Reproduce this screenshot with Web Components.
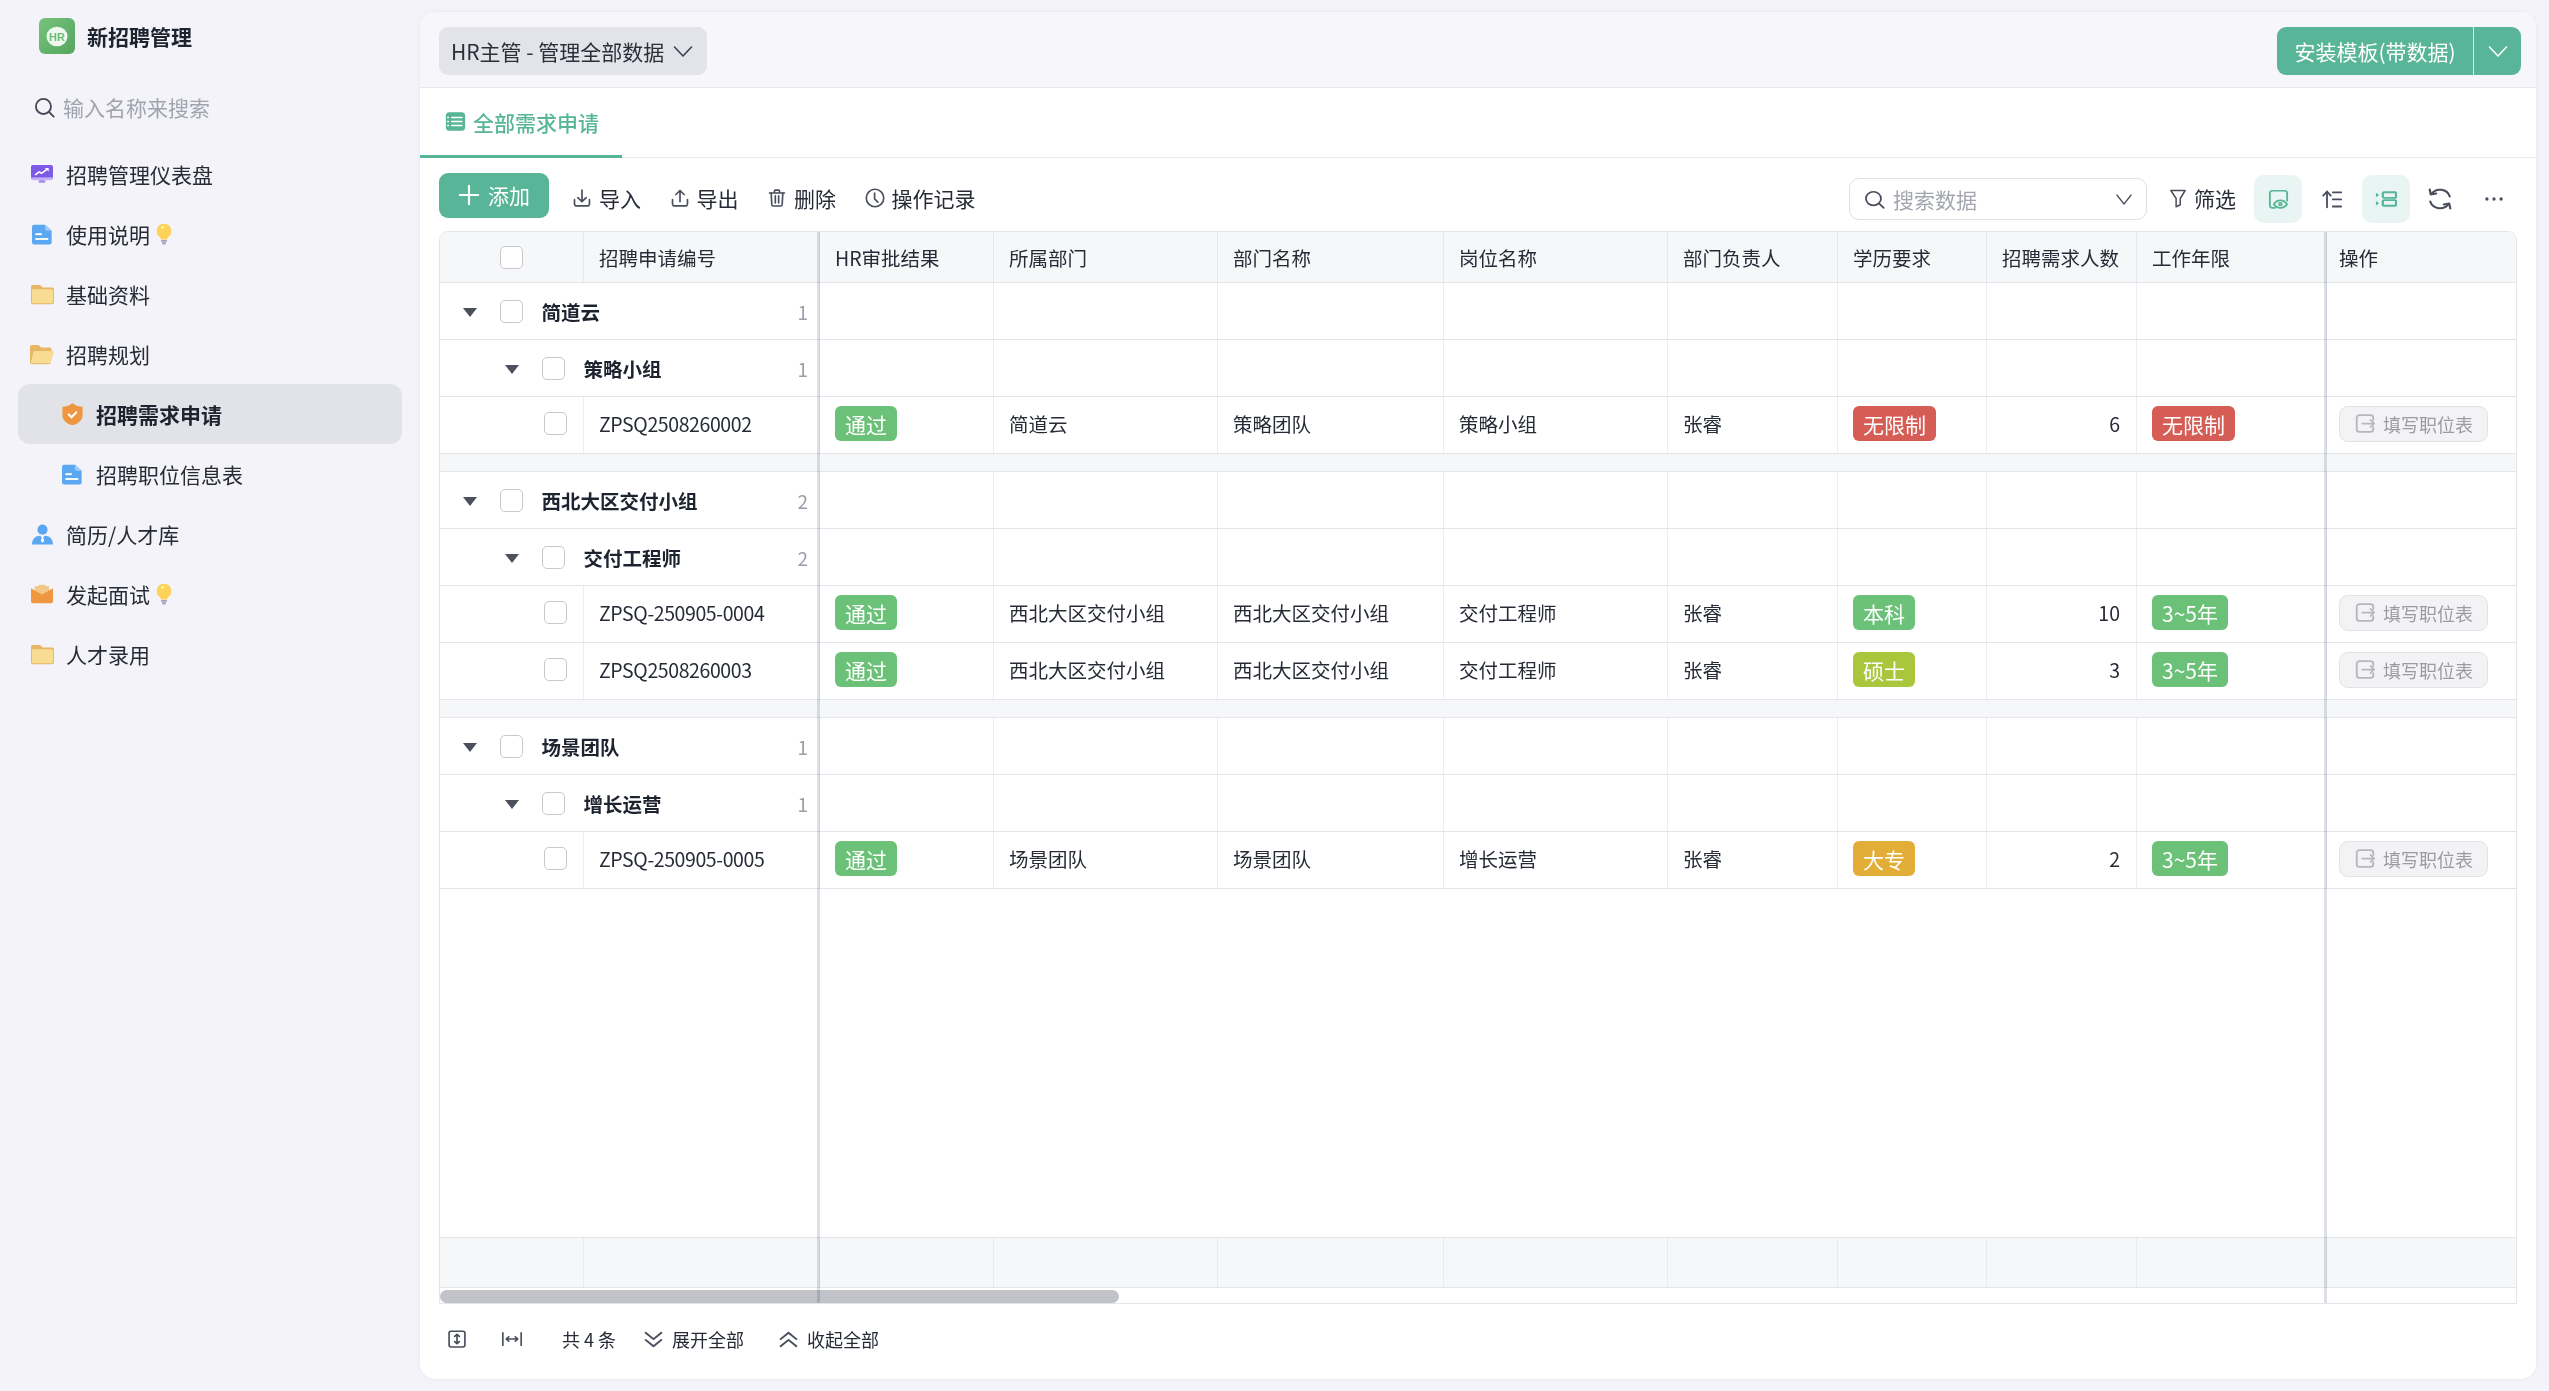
<!DOCTYPE html>
<html lang="zh-CN">
<head>
<meta charset="utf-8">
<title>新招聘管理</title>
<style>
html,body{margin:0;padding:0;height:100%;background:#f3f3f9;overflow:hidden}
body{font-family:"Noto Sans CJK SC","Noto Sans",sans-serif;color:#1f2430;font-size:21px}
</style>
</head>
<body>
<app-shell>
  <side-nav slot="side" title-text="新招聘管理" placeholder="输入名称来搜索">
    <nav-item icon="monitor" label="招聘管理仪表盘"></nav-item>
    <nav-item icon="doc" label="使用说明" bulb></nav-item>
    <nav-item icon="folder" label="基础资料"></nav-item>
    <nav-item icon="folderopen" label="招聘规划"></nav-item>
    <nav-item icon="shield" label="招聘需求申请" level="2" active></nav-item>
    <nav-item icon="doc" label="招聘职位信息表" level="2"></nav-item>
    <nav-item icon="person" label="简历/人才库"></nav-item>
    <nav-item icon="mail" label="发起面试" bulb></nav-item>
    <nav-item icon="folder" label="人才录用"></nav-item>
  </side-nav>
  <main-panel slot="main">
    <data-toolbar></data-toolbar>
    <data-table></data-table>
    <table-footer></table-footer>
  </main-panel>
</app-shell>

<script>
const S='fill="none" stroke="currentColor" stroke-linecap="round" stroke-linejoin="round"';
const ICONS={
search:`<g ${S} stroke-width="2.1"><circle cx="10.8" cy="10.8" r="8.6"/><path d="M17 17L22.5 22.5"/></g>`,
chevron:`<path ${S} stroke-width="1.6" d="M3.500 8l8.500 9 8.500-9"/>`,
plus:`<path ${S} stroke-width="2.400" d="M12 2v20M2 12h20"/>`,
importi:`<g ${S} stroke-width="2"><path d="M3 14v5a2.500 2.500 0 0 0 2.500 2.500h13A2.500 2.500 0 0 0 21 19v-5"/><path d="M12 2.500v13.500M7 11.500l5 4.800 5-4.800"/></g>`,
exporti:`<g ${S} stroke-width="2"><path d="M3 14v5a2.500 2.500 0 0 0 2.500 2.500h13A2.500 2.500 0 0 0 21 19v-5"/><path d="M12 16.500V3M7 7.800L12 3l5 4.800"/></g>`,
trash:`<g ${S} stroke-width="2"><path d="M3 6h18M9 5.500V3.500a1 1 0 0 1 1-1h4a1 1 0 0 1 1 1v2"/><path d="M5 6l.800 14a1.800 1.800 0 0 0 1.800 1.600h8.800a1.800 1.800 0 0 0 1.800-1.600L19 6"/><path d="M10 9.500v8.500M14 9.500v8.500"/></g>`,
clock:`<g ${S} stroke-width="2"><circle cx="12" cy="12" r="10.500"/><path d="M11.500 6v7l4 4"/></g>`,
filter:`<path ${S} stroke-width="2" d="M2.500 3h19L15 12.500V20l-5.500 2.500V12.500z"/>`,
eyedoc:`<g ${S} stroke-width="1.900"><path d="M8.500 21.500H5.500a2.500 2.500 0 0 1-2.500-2.500V4.500A2.500 2.500 0 0 1 5.500 2h13A2.500 2.500 0 0 1 21 4.500v9"/><path d="M7 17.500c2-3.400 4.200-4.500 7-4.500s5 1.100 7 4.500c-2 3-4.200 4-7 4s-5-1-7-4z"/><circle cx="14" cy="17.300" r="1.400"/></g>`,
sort:`<g ${S} stroke-width="2.200"><path d="M6 22V3M1.500 8L6 3l4.500 5"/><path d="M13 4h10M13 12.500h10M13 21h10"/></g>`,
rows:`<g ${S} stroke-width="2.500"><rect x="8.500" y="3" width="14.500" height="7.500" rx="1.500"/><rect x="8.500" y="13.500" width="14.500" height="7.500" rx="1.500"/></g><path fill="currentColor" d="M1 3.500l3.500 3-3.500 3zM1 14.500l3.500 3-3.500 3z"/>`,
refresh:`<g ${S} stroke-width="2"><path d="M21 9.500A9.500 9.500 0 0 0 4 7"/><path d="M3 14.500A9.500 9.500 0 0 0 20 17"/><path d="M8.500 6.500L3.500 7.500 2.500 2.500"/><path d="M15.500 17.500l5-1 1 5"/></g>`,
dots:`<g fill="currentColor"><circle cx="3.500" cy="12" r="2"/><circle cx="12" cy="12" r="2"/><circle cx="20.500" cy="12" r="2"/></g>`,
height:`<g ${S} stroke-width="2"><rect x="2.500" y="1.500" width="19" height="21" rx="2.500"/><path d="M12 6v12M9.200 8.500L12 5.800l2.800 2.700M9.200 15.500l2.800 2.700 2.800-2.700"/></g>`,
width:`<g ${S} stroke-width="1.800"><path d="M2 3.500v17M22 3.500v17M6 12h12M8.500 9L5.700 12l2.800 3M15.500 9l2.800 3-2.800 3"/></g>`,
dbldown:`<g ${S} stroke-width="2.200"><path d="M3 3.500l9 8 9-8M3 12.500l9 8 9-8"/></g>`,
dblup:`<g ${S} stroke-width="2.200"><path d="M3 11.500l9-8 9 8M3 20.500l9-8 9 8"/></g>`,
fill:`<g ${S} stroke-width="2"><path d="M21 8V5.500A3 3 0 0 0 18 2.500H6A3 3 0 0 0 3 5.500v13a3 3 0 0 0 3 3h12a3 3 0 0 0 3-3V16"/><path d="M9 12h13M18 8l4 4-4 4"/></g>`,
tab:`<rect x="1" y="1.500" width="22" height="21" rx="4" fill="currentColor"/><g stroke="#fff" stroke-width="1.800" fill="none"><path d="M2.500 7.500h2M2.500 12h2M2.500 16.500h2M7 7.500h13M7 12h13M7 16.500h13"/></g>`,
monitor:`<path fill="#a78bf0" d="M9 18h6l.8 3.500H8.200z"/><path fill="#c4b2f7" d="M0 15h24v1.500a2 2 0 0 1-2 2H2a2 2 0 0 1-2-2z"/><path fill="#7d5be6" d="M2 1h20a2 2 0 0 1 2 2v12.500H0V3a2 2 0 0 1 2-2z"/><path d="M4.500 12.500l4.500-3.500 2.500 1.700L18 5.500" fill="none" stroke="#fff" stroke-width="1.800"/><path d="M15 4.500h4.300v4.200z" fill="#fff"/>`,
doc:`<path fill="#5ba7f2" d="M2.500 1h12.800L23 8v13a2.500 2.500 0 0 1-2.500 2.500h-18A2.500 2.500 0 0 1 0 21V3.500A2.500 2.500 0 0 1 2.500 1z" transform="translate(0 -.2)"/><path fill="#9fcbf8" d="M15.300 .8L23 7.800h-5.200a2.500 2.500 0 0 1-2.500-2.500z"/><rect x="4" y="10.500" width="7.500" height="2.200" fill="#fff"/><rect x="4" y="16" width="15" height="2.200" fill="#fff"/>`,
folder:`<path fill="#e8b765" d="M2 1h7.500l3 3H22a2 2 0 0 1 2 2v15a2 2 0 0 1-2 2H2a2 2 0 0 1-2-2V3a2 2 0 0 1 2-2z"/><path fill="#f8dc94" d="M1 7.500a1.500 1.500 0 0 1 1.500-1.500h19A1.500 1.500 0 0 1 23 7.500v13a1.500 1.500 0 0 1-1.500 1.500h-19A1.500 1.500 0 0 1 1 20.500z"/>`,
folderopen:`<path fill="#e8b765" d="M2 1h7l3 3h9a2 2 0 0 1 2 2v3H24l-2 12a2 2 0 0 1-2 2H2a2 2 0 0 1-2-2V3a2 2 0 0 1 2-2z"/><path fill="#f8dc94" d="M4.800 8H24.500a.8.800 0 0 1 .8 1L22 21a1.300 1.300 0 0 1-1.300 1H2a1 1 0 0 1-.9-1.300L3.600 9A1.300 1.300 0 0 1 4.800 8z"/>`,
shield:`<path fill="#ee9740" d="M12 0l3.500 2.500c2 1 4.500 1.500 8 1.500v9.500c0 5-5 9-11.500 11C5.500 22.500.5 18.500.5 13.500V4c3.500 0 6-.5 8-1.500z"/><path d="M7 11.800l3.800 3.700 6.200-6" fill="none" stroke="#fff" stroke-width="2.300"/>`,
person:`<circle cx="12" cy="6.500" r="5.800" fill="#5ba7f2"/><path fill="#5ba7f2" d="M0 23.500c0-5 2.500-9 8-10l4 1 4-1c5.500 1 8 5 8 10z"/><path fill="#fff" d="M10.500 13.500h3l-.6 2.500 1.100 3.500-2 2-2-2 1.100-3.500z"/>`,
mail:`<path fill="#f3c98a" d="M4 8V4a1.500 1.500 0 0 1 1.500-1.500h3V1h7v1.500h3A1.500 1.500 0 0 1 20 4v4l-8 5z"/><path fill="#ee9740" d="M0 5l12 7.500L24 5v16a2 2 0 0 1-2 2H2a2 2 0 0 1-2-2z"/>`,
bulb:`<path fill="#fcd25a" d="M12 .8a8 8 0 0 1 5 14.200c-1.200 1-1.500 2-1.600 3H8.600c-.1-1-.4-2-1.600-3A8 8 0 0 1 12 .8z"/><path fill="#fff3b0" d="M8.500 5a5 5 0 0 1 4-2l-.5 2.500c-1.200.1-2 .5-2.500 1.500z"/><path fill="#a9a0b8" d="M8.800 18.500h6.400v2h-6.400zM9.500 21h5l-1 2.500h-3z"/>`
};
class UiIcon extends HTMLElement{
  connectedCallback(){
    const s=+this.getAttribute('size')||20, w=+this.getAttribute('w')||s, h=+this.getAttribute('h')||s;
    const n=this.getAttribute('name');
    const vb=n==='folderopen'?'0 0 25.500 24':'0 0 24 24';
    const root=this.shadowRoot||this.attachShadow({mode:'open'});
    root.innerHTML=`<style>:host{display:inline-flex;flex:none;width:${w}px;height:${h}px;color:${this.getAttribute('color')||'inherit'}}svg{display:block;width:100%;height:100%}</style><svg viewBox="${vb}" preserveAspectRatio="none" aria-hidden="true">${ICONS[n]||''}</svg>`;
  }
}
customElements.define('ui-icon',UiIcon);

class AppShell extends HTMLElement{
  constructor(){super();this.attachShadow({mode:'open'}).innerHTML=`<style>
  :host{display:flex;height:100vh;width:100%;box-sizing:border-box;padding:0 13px 12px 0}
  ::slotted([slot=side]){flex:none;width:420px}
  ::slotted([slot=main]){flex:1;min-width:0;margin-top:12px}
  </style><slot name="side"></slot><slot name="main"></slot>`;}
}
customElements.define('app-shell',AppShell);

class SideNav extends HTMLElement{
  connectedCallback(){
    this.attachShadow({mode:'open'}).innerHTML=`<style>
    :host{display:block;box-sizing:border-box;padding:18px 18px 0}
    .brand{display:flex;align-items:center;height:36px;padding-left:21px;gap:12px;font-weight:700;font-size:21px;color:#1e2330}
    .logo{width:36px;height:36px;flex:none;display:block}
    .search{display:flex;align-items:center;height:44px;margin:31px 0 0;padding-left:16px;gap:8px;color:#9fa4ae}
    .search ui-icon{color:#444857}
    .list{display:block;margin-top:15px}
    </style>
    <div class="brand"><svg class="logo" viewBox="0 0 36 36"><defs><linearGradient id="g" x1="0" y1="0" x2="1" y2="1"><stop offset="0" stop-color="#77c27f"/><stop offset="1" stop-color="#54a65d"/></linearGradient></defs><rect width="36" height="36" rx="6" fill="url(#g)"/><ellipse cx="18" cy="18.500" rx="10.500" ry="9.800" fill="#eef8ee"/><text x="18" y="23" text-anchor="middle" font-size="11" font-weight="700" fill="#6bbc73" font-family="Liberation Sans, sans-serif">HR</text></svg><span>${this.getAttribute('title-text')}</span></div>
    <div class="search"><ui-icon name="search" size="21"></ui-icon><span>${this.getAttribute('placeholder')}</span></div>
    <div class="list"><slot></slot></div>`;
  }
}
customElements.define('side-nav',SideNav);

class NavItem extends HTMLElement{
  connectedCallback(){
    const lvl=this.getAttribute('level')==='2', act=this.hasAttribute('active');
    const n=this.getAttribute('icon');
    const sizes={monitor:[22,21],doc:[20.500,21],folder:[23,21],folderopen:[24,21],shield:[21,22],person:[21,21],mail:[22,20]};
    const [w,h]=sizes[n]||[22,21];
    this.attachShadow({mode:'open'}).innerHTML=`<style>
    :host{display:flex;align-items:center;height:60px;border-radius:12px;padding-left:${lvl?43:12}px;background:${act?'#e2e3e8':'transparent'};font-weight:${act?700:400};color:${act?'#1e2330':'#262b36'}}
    .ic{width:${lvl?23:24}px;flex:none;display:flex;justify-content:center;margin-right:12px}
    .bulb{margin-left:3px}
    </style><span class="ic"><ui-icon name="${n}" w="${w}" h="${h}"></ui-icon></span><span>${this.getAttribute('label')}</span>${this.hasAttribute('bulb')?'<ui-icon class="bulb" name="bulb" w="22" h="22"></ui-icon>':''}`;
  }
}
customElements.define('nav-item',NavItem);

class MainPanel extends HTMLElement{
  constructor(){super();this.attachShadow({mode:'open'}).innerHTML=`<style>
  :host{display:flex;flex-direction:column;background:#fff;border-radius:15px;box-shadow:0 0 4px rgba(30,35,60,.06);overflow:hidden}
  .top{flex:none;height:72px;padding:3px 15px 0 19px;background:#f6f6fb;border-bottom:1px solid #e6e7ec;display:flex;align-items:center;justify-content:space-between}
  .sel{display:flex;align-items:center;height:48px;width:268px;box-sizing:border-box;background:#e3e4e9;border-radius:9px;padding-left:12px;color:#2a2f3a}
  .sel ui-icon{margin-left:7px;color:#3c4050}
  .split{display:flex;height:48px;background:#58b597;border-radius:9px;color:#fff;width:244px}
  .split .a{width:197px;display:flex;align-items:center;justify-content:center;border-right:1px solid #d5eee6;box-sizing:border-box}
  .split .b{flex:1;display:flex;align-items:center;justify-content:center}
  .tabs{flex:none;height:69px;border-bottom:1px solid #e9eaee;display:flex}
  .tab{width:202px;box-sizing:border-box;border-bottom:3px solid #58b597;margin-bottom:-1px;display:flex;align-items:center;gap:7px;padding-left:25px;color:#58b597;font-weight:500}
  </style>
  <div class="top"><div class="sel"><span>HR主管 - 管理全部数据</span><ui-icon name="chevron" size="24"></ui-icon></div>
  <div class="split"><span class="a">安装模板(带数据)</span><span class="b"><ui-icon name="chevron" size="24"></ui-icon></span></div></div>
  <div class="tabs"><div class="tab"><ui-icon name="tab" w="21" h="21"></ui-icon><span>全部需求申请</span></div></div>
  <slot></slot>`;}
}
customElements.define('main-panel',MainPanel);

class ToolBtn extends HTMLElement{
  connectedCallback(){
    this.attachShadow({mode:'open'}).innerHTML=`<style>:host{display:inline-flex;align-items:center;gap:7px;height:30px;color:#262b36}ui-icon{color:#4a4e5c}</style><ui-icon name="${this.getAttribute('icon')}" w="${this.getAttribute('iw')||20}" h="20"></ui-icon><span><slot></slot></span>`;
  }
}
customElements.define('tool-btn',ToolBtn);

class IconBtn extends HTMLElement{
  connectedCallback(){
    const on=this.hasAttribute('on');
    this.attachShadow({mode:'open'}).innerHTML=`<style>:host{display:flex;width:48px;height:48px;align-items:center;justify-content:center;border-radius:10px;background:${on?'#e9f5f2':'transparent'};color:${on?'#58b597':'#4a4e5c'}}</style><ui-icon name="${this.getAttribute('icon')}" w="${this.getAttribute('iw')||20}" h="${this.getAttribute('ih')||20}"></ui-icon>`;
  }
}
customElements.define('icon-btn',IconBtn);

class DataToolbar extends HTMLElement{
  connectedCallback(){
    this.attachShadow({mode:'open'}).innerHTML=`<style>
    :host{display:flex;flex:none;height:58px;padding:15px 18px 0 19px;align-items:flex-start}
    .add{display:flex;align-items:center;justify-content:center;gap:8px;width:110px;height:45px;background:#58b597;border-radius:9px;color:#fff;box-sizing:border-box;padding-bottom:1px}
    .tools{display:flex;gap:28.500px;margin:9.500px 0 0 23px}
    .right{margin-left:auto;display:flex;align-items:flex-start;gap:6px;margin-top:2px}
    .search{width:298px;height:42px;box-sizing:border-box;border:1px solid #dfe0e6;border-radius:10px;margin:3px 10px 0 0;display:flex;align-items:center;padding:0 12px 0 14px;color:#a3a6ae;gap:8px}
    .search .q{color:#4a4e5c}
    .search .c{margin-left:auto;color:#4a4e5c}
    .filter{margin:7.500px 12px 0 6px}
    </style>
    <div class="add"><ui-icon name="plus" size="22"></ui-icon><span>添加</span></div>
    <div class="tools">
      <tool-btn icon="importi">导入</tool-btn><tool-btn icon="exporti">导出</tool-btn><tool-btn icon="trash">删除</tool-btn><tool-btn icon="clock">操作记录</tool-btn>
    </div>
    <div class="right">
      <div class="search"><ui-icon class="q" name="search" w="21" h="19"></ui-icon><span>搜索数据</span><ui-icon class="c" name="chevron" w="20" h="24"></ui-icon></div>
      <tool-btn class="filter" icon="filter" iw="18">筛选</tool-btn>
      <icon-btn icon="eyedoc" on iw="23" ih="21"></icon-btn>
      <icon-btn icon="sort"></icon-btn>
      <icon-btn icon="rows" on iw="22" ih="18"></icon-btn>
      <icon-btn icon="refresh" iw="26" ih="24"></icon-btn>
      <icon-btn icon="dots" iw="20" ih="20"></icon-btn>
    </div>`;
  }
}
customElements.define('data-toolbar',DataToolbar);

class StatusTag extends HTMLElement{
  connectedCallback(){
    const c={green:'#6bc177',red:'#d65d55',lime:'#a9c63c',amber:'#e2ae38'}[this.getAttribute('tone')||'green'];
    this.attachShadow({mode:'open'}).innerHTML=`<style>:host{display:inline-flex;align-items:center;height:35px;padding:0 10px;border-radius:6px;background:${c};color:#fff;font-size:21px;white-space:nowrap}</style><slot></slot>`;
  }
}
customElements.define('status-tag',StatusTag);

class CheckMark extends HTMLElement{
  constructor(){super();this.attachShadow({mode:'open'}).innerHTML=`<style>:host{display:block;flex:none;width:23px;height:23px;box-sizing:border-box;border:1px solid #c6c8cf;border-radius:5px;background:#fff}</style>`;}
}
customElements.define('check-mark',CheckMark);

class FillBtn extends HTMLElement{
  constructor(){super();this.attachShadow({mode:'open'}).innerHTML=`<style>:host{display:inline-flex;align-items:center;width:149px;height:36px;box-sizing:border-box;border:1px solid #e2e3e7;border-radius:9px;background:#f3f3f5;color:#9b9ca2;font-size:18px;padding-left:14px;gap:7px}ui-icon{color:#b5b7be}</style><ui-icon name="fill" w="22" h="21"></ui-icon><span>填写职位表</span>`;}
}
customElements.define('fill-btn',FillBtn);

const COLS='144px 236px 174px 224px 226px 224px 170px 149px 150px 190px 190px';
class DataTable extends HTMLElement{
  connectedCallback(){
    const heads=['招聘申请编号','HR审批结果','所属部门','部门名称','岗位名称','部门负责人','学历要求','招聘需求人数','工作年限'];
    const blanks=()=>Array.from({length:9},()=>'<div class="c"></div>').join('');
    const group=(lvl,name,n)=>`<div class="r g"><div class="c span l${lvl}"><span class="caret"></span><check-mark></check-mark><b>${name}</b><i>${n}</i></div>${blanks()}</div>`;
    const leaf=(code,a,b,c,edu,eduT,num,yr,yrT)=>`<div class="r leaf"><div class="c ck"><check-mark></check-mark></div><div class="c code">${code}</div><div class="c"><status-tag>通过</status-tag></div><div class="c">${a}</div><div class="c">${b}</div><div class="c">${c}</div><div class="c">张睿</div><div class="c"><status-tag tone="${eduT}">${edu}</status-tag></div><div class="c num">${num}</div><div class="c"><status-tag tone="${yrT}">${yr}</status-tag></div><div class="c op"><fill-btn></fill-btn></div></div>`;
    const gap='<div class="sp"></div>';
    this.attachShadow({mode:'open'}).innerHTML=`<style>
    :host{display:flex;flex-direction:column;flex:1;min-height:0;margin:0 19px;position:relative;border:1px solid #e4e5ea;border-top-left-radius:9px;border-top-right-radius:9px;overflow:hidden;font-size:19.500px;color:#262b36}
    .r{display:grid;grid-template-columns:${COLS};height:57px;box-sizing:border-box;border-bottom:1px solid #e4e5ea;flex:none}
    .c{border-right:1px solid #ecedf1;box-sizing:border-box;display:flex;align-items:center;padding:0 15px;min-width:0;white-space:nowrap;overflow:hidden}
    .c:last-child{border-right:0}
    .head{height:51px;background:#f6f7f9}
    .head .c{border-right-color:#e7e8ec}
    .head .ck2{justify-content:flex-start;padding-left:60px}
    .leaf .c{padding-bottom:3px}
    .code{letter-spacing:-.4px}
    .span{grid-column:span 2;padding:0 11px 0 0}
    .span b{font-weight:700;color:#1e2330;margin-left:19px}
    .span i{font-style:normal;color:#9a9ea8;margin-left:auto;font-size:19px}
    .caret{width:14px;height:9px;flex:none;margin-right:22.500px;margin-top:3px;background:#4c505c;clip-path:polygon(0 0,100% 0,50% 100%)}
    .l1{padding-left:23px}
    .l2{padding-left:65px}
    .ck{padding-left:104px;padding-right:0}
    .num{justify-content:flex-end;padding-right:16px}
    .op{padding-left:12px;padding-right:0}
    .sp{height:18px;flex:none;box-sizing:border-box;background:#f6f7f9;border-bottom:1px solid #e4e5ea}
    .fill{flex:1;min-height:0}
    .sum{height:51px;background:#f6f7f9;border-top:1px solid #e4e5ea}
    .sum .c{border-right-color:#e9eaee}
    .track{flex:none;height:15px;padding-top:2px;box-sizing:border-box}
    .thumb{width:679px;height:13px;border-radius:7px;background:#c2c3c8}
    .frz{position:absolute;top:0;bottom:0;width:3px;background:#dde0e7;mix-blend-mode:multiply}
    </style>
    <div class="r head"><div class="c ck2"><check-mark></check-mark></div>${heads.map(h=>`<div class="c">${h}</div>`).join('')}<div class="c" style="padding-left:12px">操作</div></div>
    ${group(1,'简道云',1)}${group(2,'策略小组',1)}
    ${leaf('ZPSQ2508260002','简道云','策略团队','策略小组','无限制','red',6,'无限制','red')}
    ${gap}
    ${group(1,'西北大区交付小组',2)}${group(2,'交付工程师',2)}
    ${leaf('ZPSQ-250905-0004','西北大区交付小组','西北大区交付小组','交付工程师','本科','green',10,'3~5年','green')}
    ${leaf('ZPSQ2508260003','西北大区交付小组','西北大区交付小组','交付工程师','硕士','lime',3,'3~5年','green')}
    ${gap}
    ${group(1,'场景团队',1)}${group(2,'增长运营',1)}
    ${leaf('ZPSQ-250905-0005','场景团队','场景团队','增长运营','大专','amber',2,'3~5年','green')}
    <div class="fill"></div>
    <div class="r sum">${Array.from({length:11},()=>'<div class="c"></div>').join('')}</div>
    <div class="track"><div class="thumb"></div></div>
    <div class="frz" style="left:377px"></div><div class="frz" style="left:1884px"></div>`;
  }
}
customElements.define('data-table',DataTable);

class TableFooter extends HTMLElement{
  connectedCallback(){
    this.attachShadow({mode:'open'}).innerHTML=`<style>
    :host{display:flex;flex:none;height:75px;box-sizing:border-box;align-items:center;padding:0 0 5px 27px;font-size:18px;color:#262b36}
    ui-icon{color:#4a4e5c}
    </style>
    <ui-icon name="height" w="20" h="18"></ui-icon>
    <ui-icon name="width" w="22" h="18" style="margin-left:34px"></ui-icon>
    <span style="margin-left:39px">共 4 条</span>
    <ui-icon name="dbldown" w="21" h="19" style="margin-left:27px"></ui-icon>
    <span style="margin-left:8px">展开全部</span>
    <ui-icon name="dblup" w="21" h="19" style="margin-left:34px"></ui-icon>
    <span style="margin-left:8px">收起全部</span>`;
  }
}
customElements.define('table-footer',TableFooter);
</script>
</body>
</html>
